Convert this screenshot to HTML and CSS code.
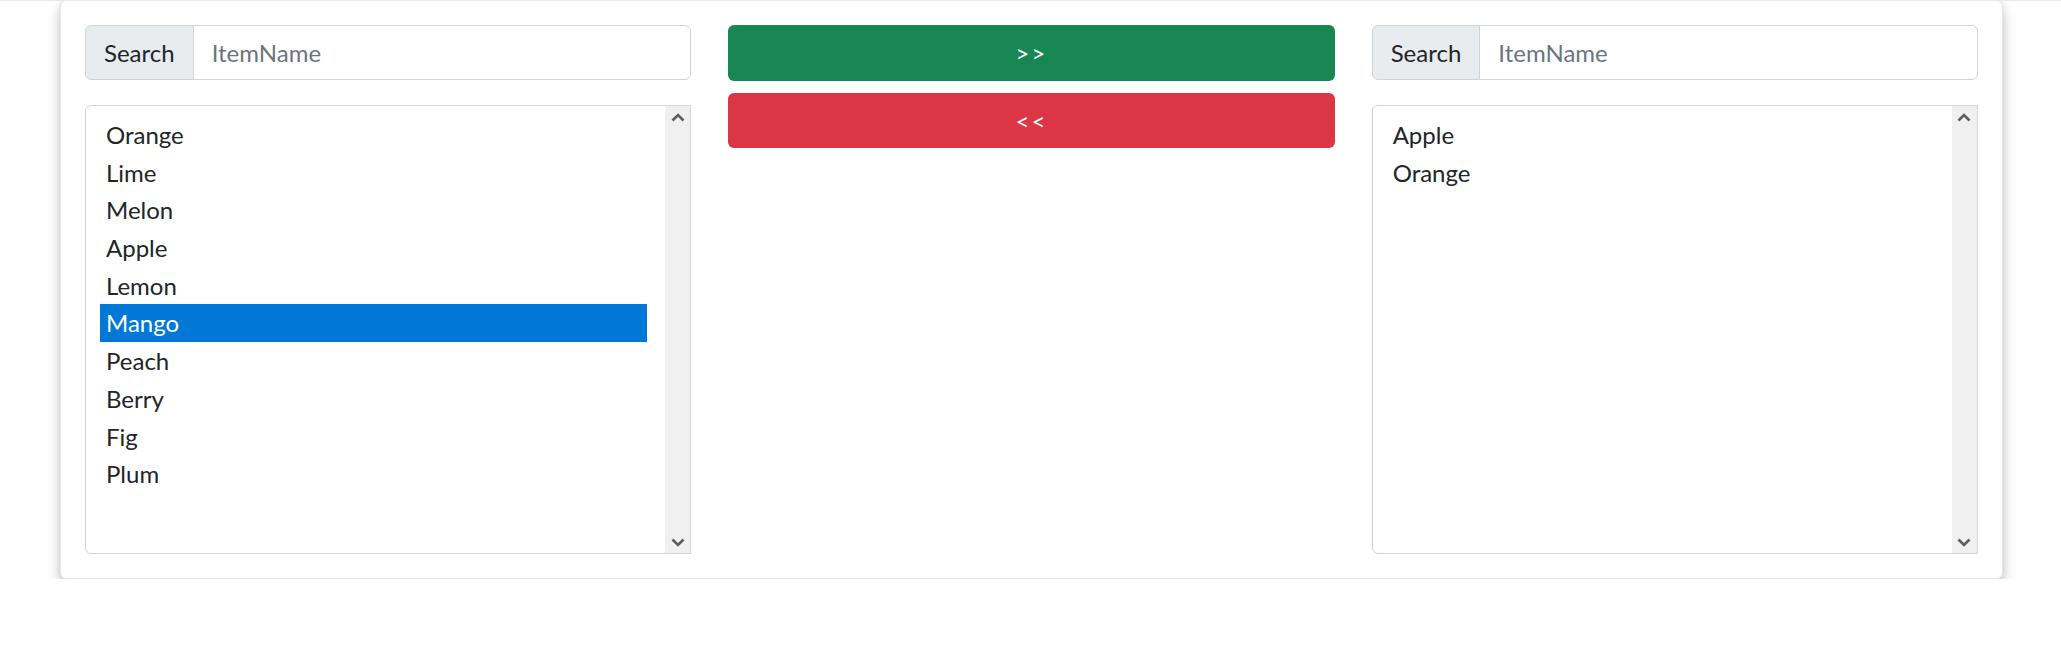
FILE: index.html
```html
<!DOCTYPE html>
<html lang="en">
<head>
<meta charset="utf-8">
<title>Dual list</title>
<link rel="stylesheet" href="styles.css">
</head>
<body>
<div class="page">
  <div class="card">
    <div class="col">
      <div class="input-group">
        <span class="addon">Search</span>
        <input class="field" type="text" placeholder="ItemName">
      </div>
      <div class="listbox">
        <ul class="options">
          <li class="opt">Orange</li>
          <li class="opt">Lime</li>
          <li class="opt">Melon</li>
          <li class="opt">Apple</li>
          <li class="opt">Lemon</li>
          <li class="opt selected">Mango</li>
          <li class="opt">Peach</li>
          <li class="opt">Berry</li>
          <li class="opt">Fig</li>
          <li class="opt">Plum</li>
        </ul>
        <div class="scrollbar">
          <svg class="arrow" width="14" height="9" viewBox="0 0 14 9"><path d="M1.5 7.5 L7 2 L12.5 7.5" fill="none" stroke="#5d5d5d" stroke-width="2.6"/></svg>
          <svg class="arrow" width="14" height="9" viewBox="0 0 14 9"><path d="M1.5 1.5 L7 7 L12.5 1.5" fill="none" stroke="#5d5d5d" stroke-width="2.6"/></svg>
        </div>
      </div>
    </div>
    <div class="col mid">
      <button class="btn btn-success" type="button">&gt;&gt;</button>
      <button class="btn btn-danger" type="button">&lt;&lt;</button>
    </div>
    <div class="col">
      <div class="input-group">
        <span class="addon">Search</span>
        <input class="field" type="text" placeholder="ItemName">
      </div>
      <div class="listbox">
        <ul class="options">
          <li class="opt">Apple</li>
          <li class="opt">Orange</li>
        </ul>
        <div class="scrollbar">
          <svg class="arrow" width="14" height="9" viewBox="0 0 14 9"><path d="M1.5 7.5 L7 2 L12.5 7.5" fill="none" stroke="#5d5d5d" stroke-width="2.6"/></svg>
          <svg class="arrow" width="14" height="9" viewBox="0 0 14 9"><path d="M1.5 1.5 L7 7 L12.5 1.5" fill="none" stroke="#5d5d5d" stroke-width="2.6"/></svg>
        </div>
      </div>
    </div>
  </div>
</div>
</body>
</html>
```

FILE: styles.css
```css
* { box-sizing: border-box; }

html, body {
  margin: 0;
  background: #ffffff;
}

body {
  font-family: Lato, "Open Sans", sans-serif;
  font-size: 24px;
  color: #212529;
  border-top: 1px solid #e9e9e9;
}

.page {
  padding: 0 58px 0 60px;
  margin-top: -1px;
}

.card {
  display: grid;
  grid-template-columns: 1fr 1fr 1fr;
  column-gap: 37px;
  padding: 24px;
  background: #fff;
  border: 1px solid #e6e6e6;
  border-radius: 6px;
  box-shadow: 0 8px 14px rgba(0, 0, 0, 0.22), 0 0 6px rgba(0, 0, 0, 0.07);
  height: 579px;
}

.col {
  display: flex;
  flex-direction: column;
  min-width: 0;
}

.mid {
  gap: 12px;
}

.input-group {
  display: flex;
  height: 55px;
  margin-bottom: 25px;
}

.addon {
  display: flex;
  align-items: center;
  padding: 0 18px;
  background: #e9ecef;
  border: 1px solid #ced4da;
  border-radius: 6px 0 0 6px;
  color: #212529;
  line-height: 1;
}

.field {
  flex: 1;
  min-width: 0;
  margin-left: -1px;
  padding: 0 18px;
  border: 1px solid #ced4da;
  border-radius: 0 6px 6px 0;
  font-family: inherit;
  font-size: 24px;
  color: #212529;
  background: #fff;
  outline: none;
}

.field::placeholder {
  color: #6c757d;
  opacity: 1;
}

.listbox {
  display: flex;
  height: 449px;
  border: 1px solid #ced4da;
  border-radius: 6px 0 0 6px;
  overflow: hidden;
}

.options {
  flex: 1;
  list-style: none;
  margin: 0;
  padding: 10px 18px 0 14px;
}

.opt {
  height: 37.7px;
  line-height: 37.7px;
  padding: 0 6px;
  white-space: nowrap;
}

.opt.selected {
  background: #0078d7;
  color: #ffffff;
}

.scrollbar {
  width: 25px;
  background: #f0f0f0;
  display: flex;
  flex-direction: column;
  justify-content: space-between;
  align-items: center;
  padding: 7px 0 6px;
}

.arrow {
  display: block;
}

.btn {
  height: 55.5px;
  width: 100%;
  border: none;
  border-radius: 6px;
  color: #ffffff;
  font-family: Lato, "Open Sans", sans-serif;
  font-size: 24px;
  letter-spacing: 2px;
  cursor: pointer;
}

.btn-success {
  background: #198754;
}

.btn-danger {
  background: #dc3545;
}
```
